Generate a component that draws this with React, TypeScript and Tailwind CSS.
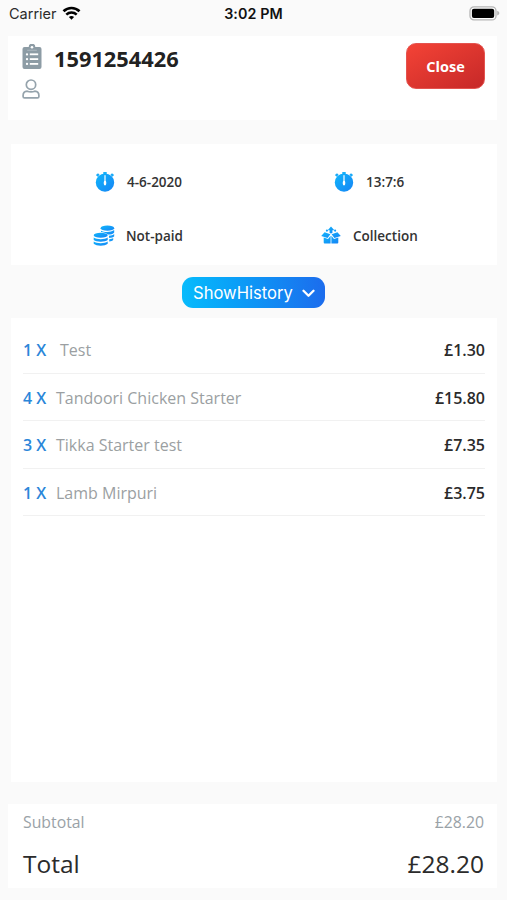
import type { ReactNode } from "react";

interface IItem {
    count: number;
    name: string;
    price: string;
    indent?: boolean;
}

const items: IItem[] = [
    { count: 1, name: "Test", price: "£1.30", indent: true },
    { count: 4, name: "Tandoori Chicken Starter", price: "£15.80" },
    { count: 3, name: "Tikka Starter test", price: "£7.35" },
    { count: 1, name: "Lamb Mirpuri", price: "£3.75" },
];

function StatusBar() {
    return (
        <div className="grid h-[36px] shrink-0 grid-cols-3 items-start pt-[4px] pr-[7px] pl-[9px] font-['Inter','Liberation_Sans',sans-serif] text-[14px] leading-[20px] text-[#111]">
            <div className="flex items-center gap-[5px]">
                <span className="text-[14.5px] text-[#2b2b2b]">Carrier</span>
                <svg width="19" height="14" viewBox="0 0 18 14" fill="none" stroke="#000" className="-mt-[2px]">
                    <path d="M1 5.2C5.6.9 12.4.9 17 5.2" strokeWidth="2.7" />
                    <path d="M3.8 8.6c3-2.8 7.4-2.8 10.4 0" strokeWidth="2.6" />
                    <path d="M9 13.8 6.4 11c1.4-1.3 3.8-1.3 5.2 0z" fill="#000" stroke="none" />
                </svg>
            </div>
            <span className="-ml-[2px] text-center text-[14.3px] font-semibold tracking-[.1px] whitespace-nowrap">3:02 PM</span>
            <svg width="31" height="15" viewBox="0 0 31 15" className="mt-[2px] justify-self-end">
                <rect x="1" y=".9" width="26" height="13" rx="4" fill="#fff" stroke="#b5b5b5" strokeWidth="1.3" />
                <rect x="2.9" y="2.8" width="22.3" height="9.2" rx="2" fill="#000" />
                <path d="M28.2 4.8c2.8 1 2.8 3.8 0 4.8z" fill="#b5b5b5" />
            </svg>
        </div>
    );
}

function ClipboardIcon() {
    return (
        <svg width="20" height="26" viewBox="0 0 20 26">
            <path
                d="M2.5 3h4.2a3.3 3.3 0 0 1 6.6 0h4.2A2 2 0 0 1 19.5 5v18a2 2 0 0 1-2 2h-15a2 2 0 0 1-2-2V5a2 2 0 0 1 2-2z"
                fill="#8d9ca5"
            />
            <circle cx="10" cy="3.3" r="1.3" fill="#fff" />
            <path d="M5.2 6.3h9.6" stroke="#a9b4bb" strokeWidth="1.2" />
            <g fill="#fff">
                <rect x="3.9" y="9.2" width="2.2" height="2.2" rx="1" />
                <rect x="3.9" y="14" width="2.2" height="2.2" rx="1" />
                <rect x="3.9" y="18.8" width="2.2" height="2.2" rx="1" />
                <rect x="7.8" y="9.4" width="8.4" height="1.8" />
                <rect x="7.8" y="14.2" width="8.4" height="1.8" />
                <rect x="7.8" y="19" width="8.4" height="1.8" />
            </g>
        </svg>
    );
}

function UserIcon() {
    return (
        <svg width="18" height="20" viewBox="0 0 18 20" fill="none" stroke="#95a3ac" strokeWidth="1.7">
            <circle cx="9" cy="5.7" r="4.7" />
            <path d="M5.2 12.2c2.5 1 5.1 1 7.6 0 2.5.2 4.1 1.8 4.1 4.3v.9c0 .9-.5 1.4-1.4 1.4h-13c-.9 0-1.4-.5-1.4-1.4v-.9c0-2.5 1.6-4.1 4.1-4.3z" />
        </svg>
    );
}

// shared by all the blue icons
function BlueGradient({ id }: { id: string }) {
    return (
        <linearGradient id={id} x1="0" y1="0" x2="1" y2="1">
            <stop stopColor="#10b6fb" />
            <stop offset="1" stopColor="#1684f5" />
        </linearGradient>
    );
}

function WatchIcon({ id }: { id: string }) {
    return (
        <svg width="20" height="20" viewBox="0 0 20 20">
            <BlueGradient id={id} />
            <path d="M.9 3.1 3 1.3l1.6 1.5-2 2zM19.1 3.1 17 1.3l-1.6 1.5 2 2z" fill="#19aaf8" />
            <path d="M8.3 0h3.4v2h-3.4z" fill="#15b1f9" />
            <circle cx="10" cy="10.6" r="9.2" fill={`url(#${id})`} />
            <path d="M10 3.8v9" stroke="#d9f2ff" strokeWidth="1.4" strokeLinecap="round" />
            <ellipse cx="10" cy="11" rx="1.3" ry="2.2" fill="#fff" />
        </svg>
    );
}

function CoinsIcon() {
    return (
        <svg width="22" height="21" viewBox="0 0 22 21" className="-mt-[2px]">
            <BlueGradient id="coins" />
            <g fill="url(#coins)">
                <ellipse cx="14.4" cy="3.2" rx="6.8" ry="2.6" />
                <path d="M8 5.7c3 1.8 10 1.8 13.2-.6v2.3c-1 1.5-3.6 2.1-6.3 2.2C13 7.6 10.4 7 8 6.9z" />
                <path d="M15.9 10.8c2.3-.2 4.2-.8 5.3-1.8v2.2c-.8 1-2.7 1.6-5 1.8z" />
                <path d="M16.2 14.2c1.9-.2 3.2-.6 4-1.2V15c-.7.8-2.1 1.2-4 1.4z" />
                <ellipse cx="7.7" cy="10.2" rx="7" ry="2.5" />
                <path d="M.7 12.4c3 2.3 11 2.3 14 0v2.5c-2.7 2.3-11.3 2.3-14 0z" />
                <path d="M.7 16.4c3 2.3 11 2.3 14 0v2.4c-2.7 2.5-11.3 2.5-14 0z" />
            </g>
        </svg>
    );
}

function BoxIcon() {
    return (
        <svg width="20" height="18" viewBox="0 0 20 18" className="-mt-[2px]">
            <BlueGradient id="box" />
            <g fill="url(#box)">
                <path d="M3.6 6.2 9.4 8.3 6.6 12 .2 10zM16.4 6.2l-5.8 2.1 2.8 3.7 6.4-2z" />
                <path d="M2.7 11.6 7 13l2.6-3.2v7.6H3.7a1 1 0 0 1-1-1zM17.3 11.6 13 13l-2.6-3.2v7.6h5.9a1 1 0 0 0 1-1z" />
                <path d="m10 .6 3.3 3.6h-1.9V7L10 7.6 8.6 7V4.2H6.7z" />
                <circle cx="5.9" cy="4.6" r="1.1" />
                <circle cx="14.1" cy="4.6" r="1.1" />
            </g>
        </svg>
    );
}

function InfoCell({ icon, text, className }: { icon: ReactNode; text: string; className: string }) {
    return (
        <div className={`flex h-[20px] items-center ${className}`}>
            {icon}
            <span className="text-[13.5px] leading-5 font-semibold text-[#333]">{text}</span>
        </div>
    );
}

function ItemRow({ item }: { item: IItem }) {
    return (
        <div className="flex h-[47.6px] items-center border-b border-[#f1f1f1] pt-[2px] text-[16px] leading-6">
            <span className={`w-[33px] font-semibold whitespace-nowrap text-[#2b86d9] ${item.indent && "mr-[4px]"}`}>{item.count} X</span>
            <span className="text-[#9b9fa2]">{item.name}</span>
            <span className="ml-auto font-semibold text-[#2b2b2b]">{item.price}</span>
        </div>
    );
}

export default function App() {
    return (
        <div className="flex h-[900px] w-[507px] flex-col overflow-hidden bg-[#fafafa] font-['Open_Sans','Noto_Sans',sans-serif]">
            <StatusBar />

            <header className="mr-[10px] ml-[8px] flex h-[84px] shrink-0 items-start justify-between bg-white pt-[7px] pr-[12px] pl-[14px]">
                <div className="flex flex-col gap-[8px]">
                    <div className="flex h-[28px] items-center gap-[12px]">
                        <ClipboardIcon />
                        <h1 className="mt-[4px] text-[21.8px] leading-[26px] font-bold text-[#222]">1591254426</h1>
                    </div>
                    <UserIcon />
                </div>
                <button className="h-[46px] w-[79px] rounded-[10px] border border-[#e4534f] bg-linear-to-br from-[#f44336] to-[#c62828] pt-px text-[14.5px] font-bold text-white">
                    Close
                </button>
            </header>

            <section className="mt-[24px] mr-[10px] ml-[11px] grid h-[121px] shrink-0 grid-cols-2 content-start gap-y-[34px] bg-white pt-[28px]">
                <InfoCell icon={<WatchIcon id="date" />} text="4-6-2020" className="gap-[12px] pl-[84px]" />
                <InfoCell icon={<WatchIcon id="time" />} text="13:7:6" className="gap-[12px] pl-[80px]" />
                <InfoCell icon={<CoinsIcon />} text="Not-paid" className="gap-[11px] pl-[82px]" />
                <InfoCell icon={<BoxIcon />} text="Collection" className="gap-[12px] pl-[67px]" />
            </section>

            <button className="mt-[12px] ml-[182px] flex h-[31px] w-[143px] shrink-0 items-center justify-between rounded-[11px] bg-linear-to-r from-[#08bbfc] to-[#1c6ced] pt-px pr-[10px] pl-[11px] font-['Inter','Liberation_Sans',sans-serif] text-[16.6px] text-white">
                ShowHistory
                <svg width="13" height="9" viewBox="0 0 13 9" fill="none" stroke="#fff" strokeWidth="2.3" strokeLinecap="round" strokeLinejoin="round">
                    <path d="m1.5 1.8 5 5 5-5" />
                </svg>
            </button>

            <section className="mt-[10px] mr-[10px] ml-[11px] h-[464px] shrink-0 bg-white pt-[8px] pr-[12px] pl-[12px]">
                {items.map((item) => (
                    <ItemRow key={item.name} item={item} />
                ))}
            </section>

            <footer className="mt-[22px] mr-[10px] ml-[8px] h-[84px] shrink-0 bg-white pt-[6px] pr-[13px] pl-[15px]">
                <div className="flex justify-between text-[15.8px] leading-6 text-[#9aa2a7]">
                    <span>Subtotal</span>
                    <span>£28.20</span>
                </div>
                <div className="mt-[13px] flex justify-between text-[24.5px] leading-[34px] text-[#2b2b2b]">
                    <span>Total</span>
                    <span>£28.20</span>
                </div>
            </footer>
        </div>
    );
}
